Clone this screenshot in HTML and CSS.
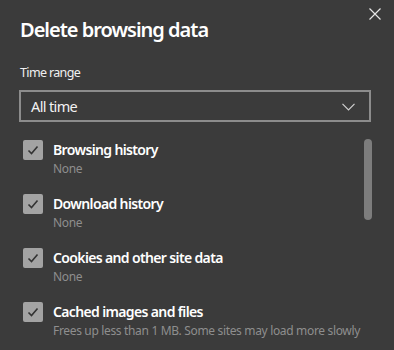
FILE: index.html
```html
<!DOCTYPE html>
<html lang="en">
<head>
    <meta charset="UTF-8">
    <title>Delete browsing data</title>
    <link rel="stylesheet" href="styles.css">
</head>
<body>
    <div class="dialog">
        <button class="close-btn" aria-label="Close">
            <svg width="12" height="12" viewBox="0 0 12 12"><path d="M0.5 0.5 L11.5 11.5 M11.5 0.5 L0.5 11.5" stroke="#e6e6e6" stroke-width="1.2" fill="none"/></svg>
        </button>

        <h1>Delete browsing data</h1>

        <label class="range-label">Time range</label>
        <div class="select">
            <span>All time</span>
            <svg width="13" height="8" viewBox="0 0 13 8"><path d="M0.5 0.8 L6.5 6.8 L12.5 0.8" stroke="#d0d0d0" stroke-width="1.2" fill="none"/></svg>
        </div>

        <div class="list-wrap">
            <ul class="options">
                <li>
                    <span class="check"><svg width="20" height="20" viewBox="0 0 20 20"><path d="M5.5 10.5 L8.5 13.5 L14.5 6.5" stroke="#333" stroke-width="1.6" fill="none"/></svg></span>
                    <div>
                        <div class="opt-title">Browsing history</div>
                        <div class="opt-sub">None</div>
                    </div>
                </li>
                <li>
                    <span class="check"><svg width="20" height="20" viewBox="0 0 20 20"><path d="M5.5 10.5 L8.5 13.5 L14.5 6.5" stroke="#333" stroke-width="1.6" fill="none"/></svg></span>
                    <div>
                        <div class="opt-title">Download history</div>
                        <div class="opt-sub">None</div>
                    </div>
                </li>
                <li>
                    <span class="check"><svg width="20" height="20" viewBox="0 0 20 20"><path d="M5.5 10.5 L8.5 13.5 L14.5 6.5" stroke="#333" stroke-width="1.6" fill="none"/></svg></span>
                    <div>
                        <div class="opt-title">Cookies and other site data</div>
                        <div class="opt-sub">None</div>
                    </div>
                </li>
                <li>
                    <span class="check"><svg width="20" height="20" viewBox="0 0 20 20"><path d="M5.5 10.5 L8.5 13.5 L14.5 6.5" stroke="#333" stroke-width="1.6" fill="none"/></svg></span>
                    <div>
                        <div class="opt-title">Cached images and files</div>
                        <div class="opt-sub">Frees up less than 1 MB. Some sites may load more slowly</div>
                    </div>
                </li>
            </ul>
            <div class="scrollbar"></div>
        </div>
    </div>
</body>
</html>
```

FILE: styles.css
```css
* {
    margin: 0;
    padding: 0;
    box-sizing: border-box;
}

body {
    font-family: 'Noto Sans', 'Open Sans', sans-serif;
    background: #3b3b3b;
    color: #ffffff;
    height: 350px;
    overflow: hidden;
    letter-spacing: -0.04em;
}

.dialog {
    position: relative;
    padding: 16px 23px 0 19px;
}

.close-btn {
    position: absolute;
    top: 8px;
    right: 13px;
    background: none;
    border: none;
    width: 12px;
    height: 12px;
    display: block;
}

.close-btn svg {
    display: block;
}

h1 {
    font-size: 20px;
    font-weight: 600;
    line-height: 28px;
    letter-spacing: -0.05em;
    padding-left: 1px;
    margin-bottom: 20px;
}

.range-label {
    display: block;
    font-size: 12.5px;
    line-height: 18px;
    color: #f0f0f0;
    padding-left: 1px;
    margin-bottom: 8px;
}

.select {
    height: 32px;
    border: 2px solid #8c8c8c;
    display: flex;
    align-items: center;
    justify-content: space-between;
    padding: 0 14px 0 10px;
    font-size: 14.5px;
    color: #f2f2f2;
}

.select svg {
    display: block;
    margin-top: 1px;
}

.list-wrap {
    display: flex;
    justify-content: space-between;
    margin-top: 18px;
}

.options {
    list-style: none;
    padding-left: 4px;
    flex: 1;
    min-width: 0;
}

.options li {
    display: flex;
    gap: 10px;
    height: 54px;
}

.check {
    width: 20px;
    height: 20px;
    background: #a3a3a3;
    border-radius: 2px;
    flex-shrink: 0;
}

.check svg {
    display: block;
}

.opt-title {
    font-size: 14px;
    font-weight: 600;
    line-height: 18px;
    margin-top: 1px;
}

.opt-sub {
    font-size: 12px;
    line-height: 16px;
    margin-top: 2px;
    color: #8e8e8e;
    letter-spacing: -0.028em;
    white-space: nowrap;
}

.scrollbar {
    width: 8px;
    height: 81px;
    background: #7d7d7d;
    border-radius: 4px;
    margin-top: -1px;
    margin-right: -1px;
    flex-shrink: 0;
}
```
